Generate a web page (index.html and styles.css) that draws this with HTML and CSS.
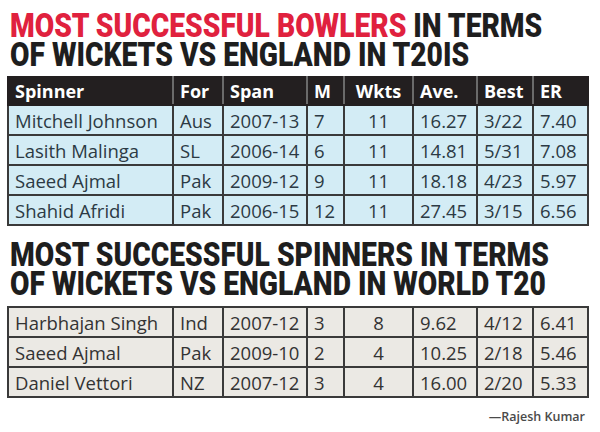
FILE: index.html
```html
<!DOCTYPE html>
<html>
<head>
<meta charset="utf-8">
<link rel="stylesheet" href="styles.css">
</head>
<body>
<div class="page">
  <h1 class="title"><span class="red">MOST SUCCESSFUL BOWLERS</span> IN TERMS<br>OF WICKETS VS ENGLAND IN T20IS</h1>
  <table class="stats blue">
    <colgroup>
      <col class="c-name"><col class="c-for"><col class="c-span"><col class="c-m"><col class="c-w"><col class="c-ave"><col class="c-best"><col class="c-er">
    </colgroup>
    <thead>
      <tr><th>Spinner</th><th>For</th><th>Span</th><th>M</th><th class="ctr">Wkts</th><th>Ave.</th><th>Best</th><th>ER</th></tr>
    </thead>
    <tbody>
      <tr><td>Mitchell Johnson</td><td>Aus</td><td>2007-13</td><td>7</td><td class="ctr">11</td><td>16.27</td><td>3/22</td><td>7.40</td></tr>
      <tr><td>Lasith Malinga</td><td>SL</td><td>2006-14</td><td>6</td><td class="ctr">11</td><td>14.81</td><td>5/31</td><td>7.08</td></tr>
      <tr><td>Saeed Ajmal</td><td>Pak</td><td>2009-12</td><td>9</td><td class="ctr">11</td><td>18.18</td><td>4/23</td><td>5.97</td></tr>
      <tr><td>Shahid Afridi</td><td>Pak</td><td>2006-15</td><td>12</td><td class="ctr">11</td><td>27.45</td><td>3/15</td><td>6.56</td></tr>
    </tbody>
  </table>
  <h1 class="title second">MOST SUCCESSFUL SPINNERS IN TERMS<br>OF WICKETS VS ENGLAND IN WORLD T20</h1>
  <table class="stats gray">
    <colgroup>
      <col class="c-name"><col class="c-for"><col class="c-span"><col class="c-m"><col class="c-w"><col class="c-ave"><col class="c-best"><col class="c-er">
    </colgroup>
    <tbody>
      <tr><td>Harbhajan Singh</td><td>Ind</td><td>2007-12</td><td>3</td><td class="ctr">8</td><td>9.62</td><td>4/12</td><td>6.41</td></tr>
      <tr><td>Saeed Ajmal</td><td>Pak</td><td>2009-10</td><td>2</td><td class="ctr">4</td><td>10.25</td><td>2/18</td><td>5.46</td></tr>
      <tr><td>Daniel Vettori</td><td>NZ</td><td>2007-12</td><td>3</td><td class="ctr">4</td><td>16.00</td><td>2/20</td><td>5.33</td></tr>
    </tbody>
  </table>
  <p class="credit">—Rajesh Kumar</p>
</div>
</body>
</html>
```

FILE: styles.css
```css
html, body {
  margin: 0;
  padding: 0;
  background: #ffffff;
}
.page {
  width: 580px;
  padding: 11px 13px 0 7px;
  font-family: "Open Sans", "DejaVu Sans", sans-serif;
}
.title {
  margin: 0 0 0 3px;
  font-family: "Roboto", "Liberation Sans", sans-serif;
  font-weight: 900;
  font-size: 33px;
  line-height: 29px;
  color: #1e1e1e;
  letter-spacing: 0;
  white-space: nowrap;
  transform: scaleX(0.855);
  transform-origin: left top;
}
.title .red {
  color: #e0213e;
}
.title.second {
  margin-top: 14px;
}
.stats {
  width: 580px;
  border-collapse: collapse;
  table-layout: fixed;
  margin-top: 7px;
  border: 2px solid #3a3a3a;
}
.c-name { width: 165px; }
.c-for { width: 50px; }
.c-span { width: 84px; }
.c-m { width: 37px; }
.c-w { width: 69px; }
.c-ave { width: 64px; }
.c-best { width: 56px; }
.c-er { width: 55px; }
.stats th, .stats td {
  border: 2px solid #3a3a3a;
  padding: 0 0 0 6px;
  height: 28px;
  text-align: left;
  font-size: 18.5px;
  font-weight: 500;
  white-space: nowrap;
  overflow: hidden;
}
.stats th {
  background: #231f20;
  color: #ffffff;
  font-weight: 700;
  font-size: 18px;
  border-color: #231f20;
  border-right-color: #6a6a6a;
  height: 26px;
}
.stats th:last-child { border-right-color: #231f20; }
.stats .ctr { text-align: center; padding-left: 0; }
.blue td {
  background: #d3ecf5;
  color: #2c3a44;
}
.gray td {
  background: #ebe9e4;
  color: #333333;
}
.gray { margin-top: 8px; }
.credit {
  margin: 10px 2px 0 0;
  text-align: right;
  font-size: 12.5px;
  color: #4a4a4a;
  font-family: "Open Sans", sans-serif;
  font-weight: 600;
}
```
